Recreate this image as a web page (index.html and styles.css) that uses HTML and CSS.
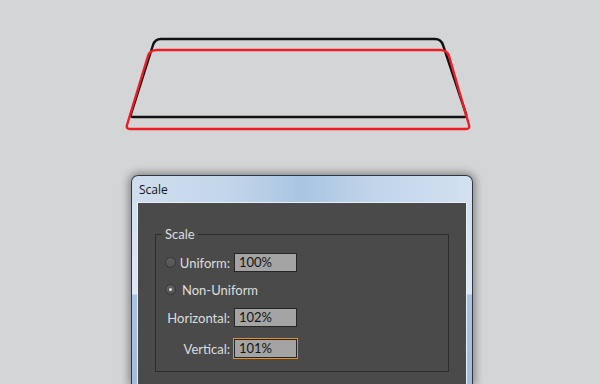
FILE: index.html
```html
<!DOCTYPE html>
<html lang="en">
<head>
<meta charset="utf-8">
<title>Scale</title>
<link rel="stylesheet" href="styles.css">
</head>
<body>
<svg class="canvas" width="600" height="175" viewBox="0 0 600 175" xmlns="http://www.w3.org/2000/svg">
  <path class="shape-black" d="M133 117 Q130 117 131 114 L153 45 Q155 39 161 39 L435 39 Q441 39 443 45 L466 114 Q467 117 464 117 Z"/>
  <path class="shape-red" d="M130 129 Q126 129 127 125 L148 56 Q150 50 157 50 L440 50 Q447 50 449 56 L469 125 Q470 129 466 129 Z"/>
</svg>
<div class="window">
  <div class="titlebar">Scale</div>
  <div class="panel">
    <fieldset class="group">
      <legend class="legend">Scale</legend>
      <div class="row row-uniform">
        <div class="lab"><span class="radio"></span><span>Uniform:</span></div>
        <div class="field">100%</div>
      </div>
      <div class="row row-nonuniform">
        <span class="radio checked"></span><span class="radio-text">Non-Uniform</span>
      </div>
      <div class="row row-horizontal">
        <div class="lab"><span>Horizontal:</span></div>
        <div class="field">102%</div>
      </div>
      <div class="row row-vertical">
        <div class="lab"><span>Vertical:</span></div>
        <div class="field focused">101%</div>
      </div>
    </fieldset>
  </div>
</div>
</body>
</html>
```

FILE: styles.css
```css
html, body {
  margin: 0;
  padding: 0;
}
body {
  width: 600px;
  height: 384px;
  overflow: hidden;
  background: #d4d5d6;
  font-family: Lato, "Open Sans", sans-serif;
}
.canvas {
  display: block;
}
.shape-black {
  fill: none;
  stroke: #111111;
  stroke-width: 2.4;
  stroke-linejoin: round;
}
.shape-red {
  fill: none;
  stroke: #ee1c24;
  stroke-width: 2.4;
  stroke-linejoin: round;
}
.window {
  margin-left: 131px;
  width: 342px;
  height: 209px;
  box-sizing: border-box;
  border: 1px solid #2e3842;
  border-bottom: none;
  border-radius: 7px 7px 0 0;
  padding: 0 5px;
  background:
    linear-gradient(90deg, #cfdeee 0%, #c3d6ea 28%, #a9c5e1 50%, #c2d5ea 72%, #d3e1f0 100%) top left / 100% 26px no-repeat,
    linear-gradient(#cfdeee 0, #dde8f4 118px, #aac3de 119px, #a2bcd9 100%);
  box-shadow: 0 0 9px 2px rgba(0, 0, 0, 0.4);
}
.titlebar {
  height: 26px;
  padding-left: 2px;
  display: flex;
  align-items: center;
  font-family: "Open Sans", "Noto Sans", sans-serif;
  font-size: 12px;
  color: #141414;
  padding-top: 1px;
  box-sizing: border-box;
}
.panel {
  height: 182px;
  box-sizing: border-box;
  border: 1px solid #e8eff7;
  border-bottom: none;
  background: #4a4a4a;
  padding: 23px 17px 0 17px;
}
.group {
  margin: 0;
  width: 294px;
  height: 146px;
  box-sizing: border-box;
  border: 1px solid #2c2c2c;
  padding: 0 0 0 10px;
  display: flex;
  flex-direction: column;
  align-items: flex-start;
}
.legend {
  margin-left: -4px;
  padding: 0 3px;
  font-size: 13px;
  line-height: 16px;
  color: #dedede;
}
.row {
  display: flex;
  align-items: center;
  height: 19px;
  font-size: 13px;
  color: #dedede;
}
.row-uniform { margin-top: 11px; }
.row-nonuniform { margin-top: 8px; }
.row-horizontal { margin-top: 9px; }
.row-vertical { margin-top: 12px; }
.lab {
  width: 64px;
  display: flex;
  justify-content: flex-end;
  align-items: center;
}
.lab .radio {
  margin-right: auto;
}
.radio {
  flex: 0 0 auto;
  width: 11px;
  height: 11px;
  margin-left: -1px;
  box-sizing: border-box;
  border-radius: 50%;
  border: 1px solid #353535;
  background: linear-gradient(#606060, #535353);
  display: flex;
  align-items: center;
  justify-content: center;
}
.radio.checked::after {
  content: "";
  width: 3px;
  height: 3px;
  border-radius: 50%;
  background: #ededed;
}
.radio-text {
  margin-left: 6px;
}
.field {
  flex: 0 0 auto;
  margin-left: 4px;
  width: 63px;
  height: 19px;
  box-sizing: border-box;
  border: 1px solid #262626;
  background: #a4a4a4;
  color: #141414;
  padding-left: 4px;
  font-size: 13px;
  line-height: 17px;
}
.field.focused {
  outline: 1px solid #f0901c;
}
```
